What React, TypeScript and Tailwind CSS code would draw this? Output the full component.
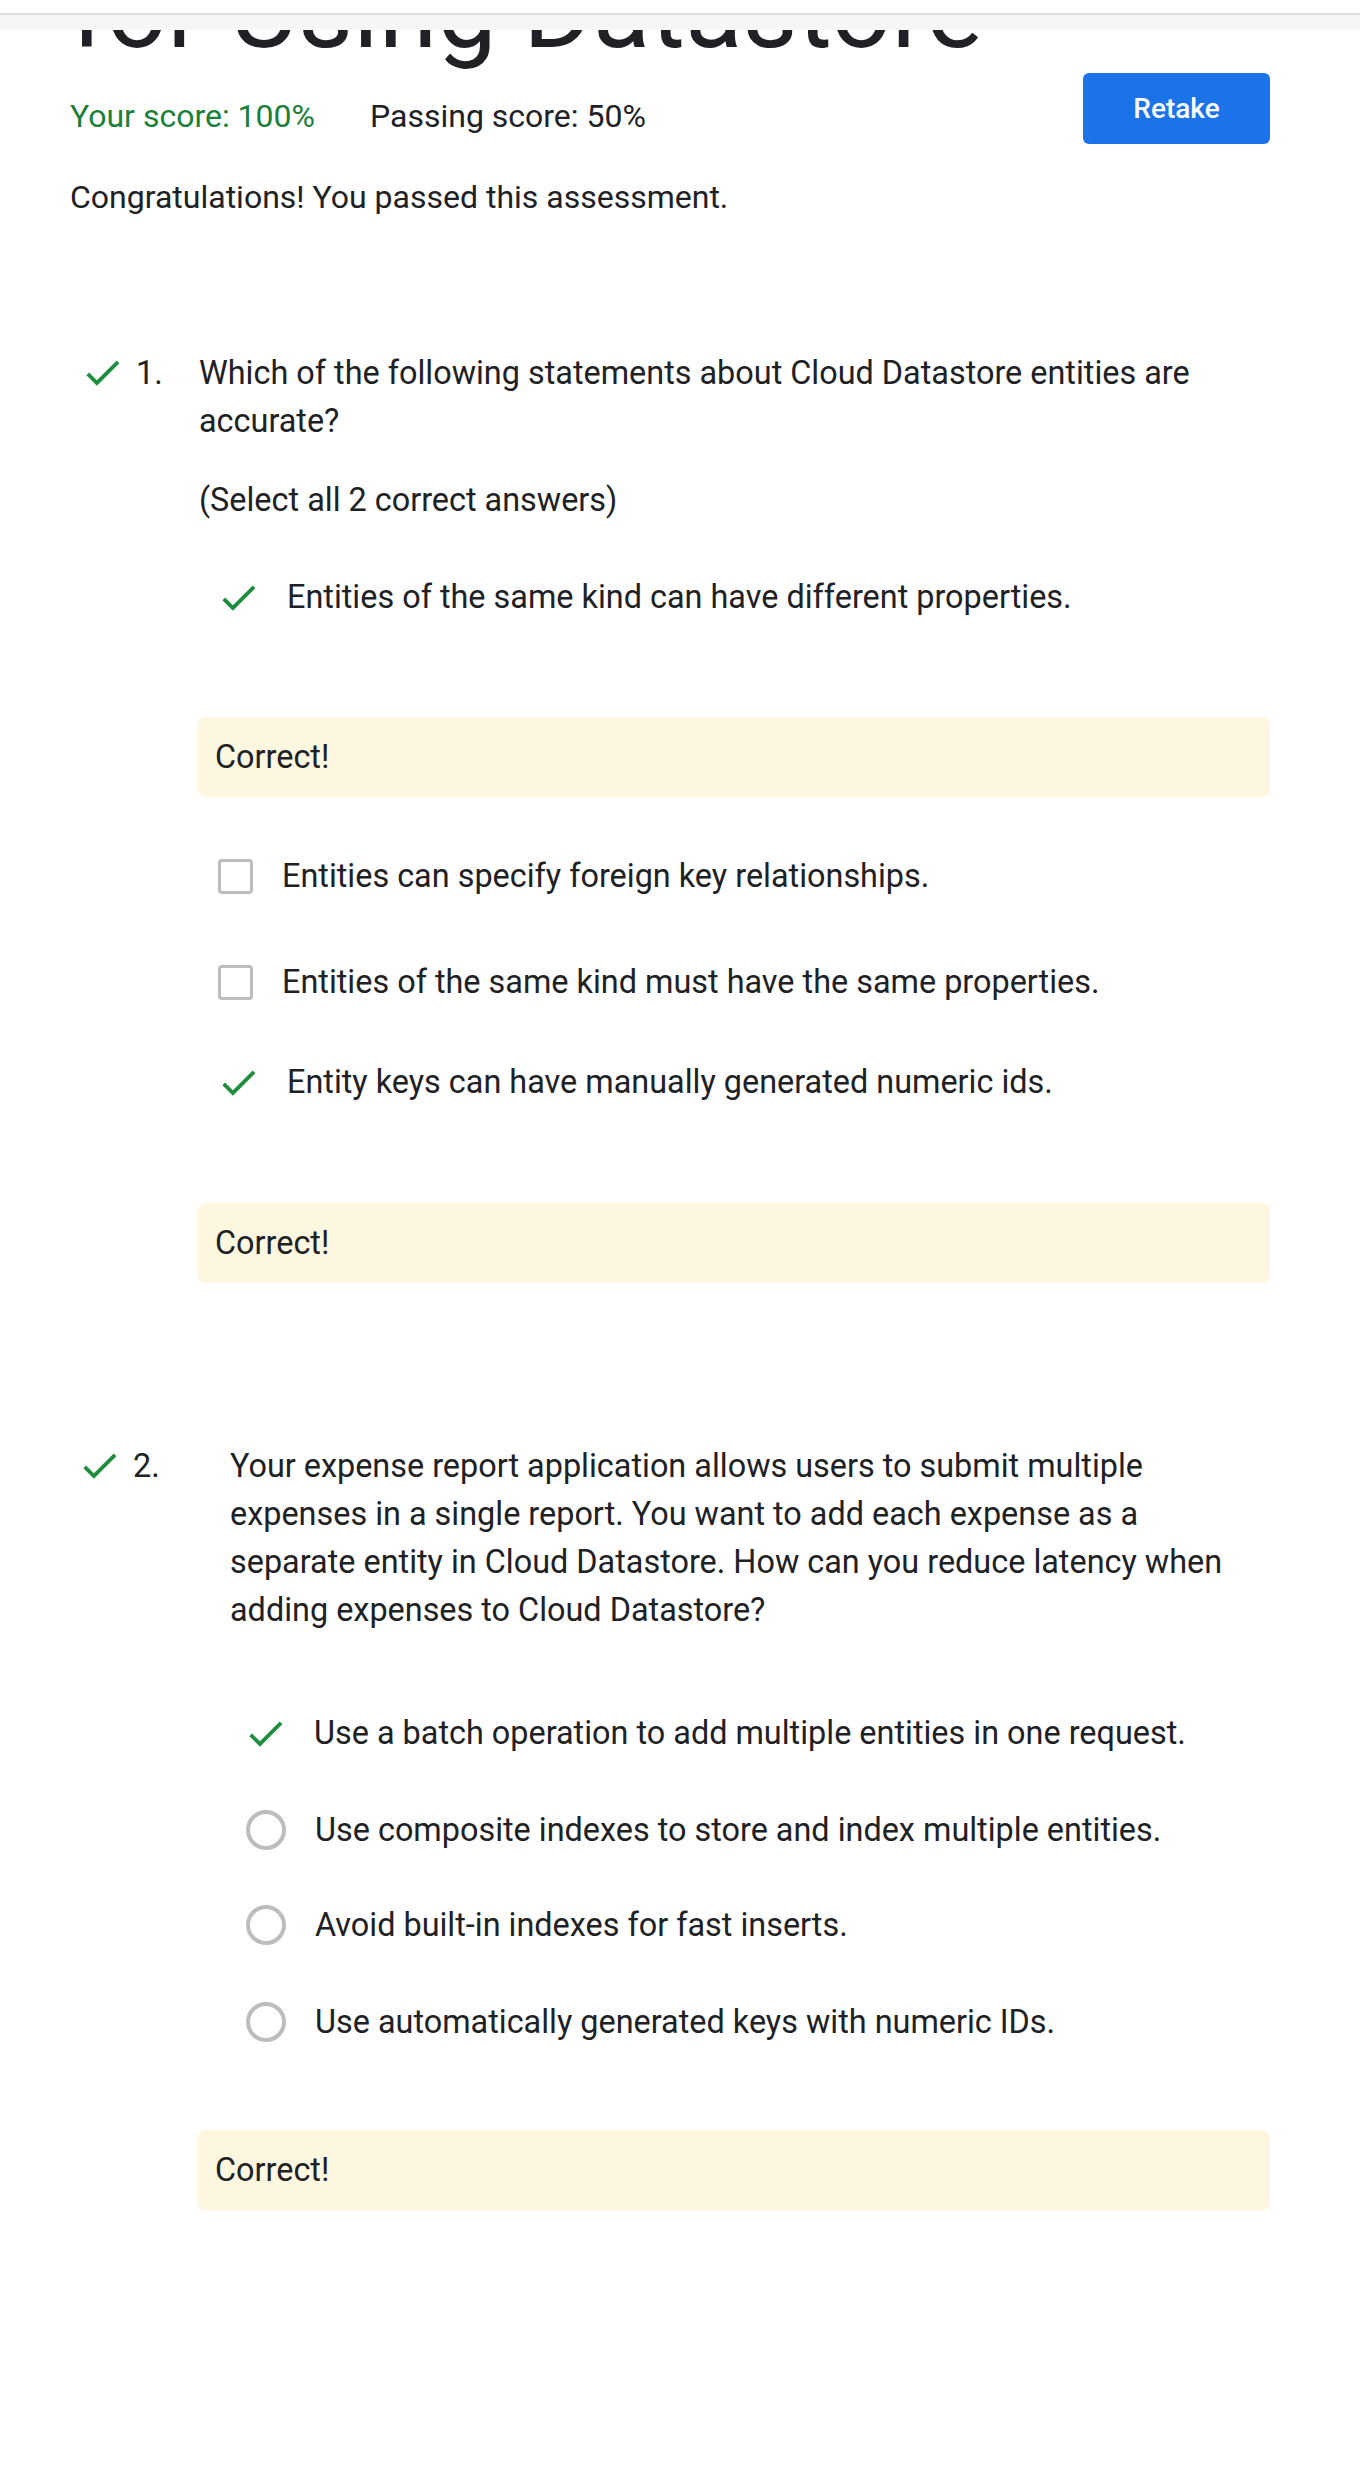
import React from 'react';

type OptionKind = 'check' | 'box' | 'radio';

interface Option {
  kind: OptionKind;
  text: string;
  mt: string;
  feedback?: string; // class for margin above the "Correct!" box
}

function CheckIcon({ className }: { className?: string }) {
  return (
    <svg viewBox="0 0 24 24" className={className} aria-hidden="true">
      <path fill="#1e8e3e" d="M9 16.17L4.83 12l-1.42 1.41L9 19 21 7l-1.41-1.41z" />
    </svg>
  );
}

function Feedback({ mt }: { mt: string }) {
  return (
    <div className={`${mt} h-[80px] rounded-[7px] bg-[#fef7e0] flex items-center pl-[17px]`}>
      Correct!
    </div>
  );
}

const q1Options: Option[] = [
  { kind: 'check', text: 'Entities of the same kind can have different properties.', mt: 'mt-[49px]', feedback: 'mt-[96px]' },
  { kind: 'box', text: 'Entities can specify foreign key relationships.', mt: 'mt-[55px]' },
  { kind: 'box', text: 'Entities of the same kind must have the same properties.', mt: 'mt-[58px]' },
  { kind: 'check', text: 'Entity keys can have manually generated numeric ids.', mt: 'mt-[52px]', feedback: 'mt-[97px]' },
];

const q2Options: Option[] = [
  { kind: 'check', text: 'Use a batch operation to add multiple entities in one request.', mt: 'mt-[75px]' },
  { kind: 'radio', text: 'Use composite indexes to store and index multiple entities.', mt: 'mt-[49px]' },
  { kind: 'radio', text: 'Avoid built-in indexes for fast inserts.', mt: 'mt-[47px]' },
  { kind: 'radio', text: 'Use automatically generated keys with numeric IDs.', mt: 'mt-[49px]' },
];

function OptionRow({ option, wide }: { option: Option; wide?: boolean }) {
  return (
    <>
      <div className={`${option.mt} flex h-[48px] items-center`}>
        {option.kind === 'check' && (
          <>
            <CheckIcon className={`${wide ? 'ml-[45px]' : 'ml-[18px]'} h-[45px] w-[45px] shrink-0`} />
            <span className="ml-[26px]">{option.text}</span>
          </>
        )}
        {option.kind === 'box' && (
          <>
            <span className="ml-[20px] h-[35px] w-[35px] shrink-0 rounded-[4px] border-[3.5px] border-[#bdbdbd]" />
            <span className="ml-[29px]">{option.text}</span>
          </>
        )}
        {option.kind === 'radio' && (
          <>
            <span className="ml-[48px] h-[40px] w-[40px] shrink-0 rounded-full border-[4px] border-[#bdbdbd]" />
            <span className="ml-[29px]">{option.text}</span>
          </>
        )}
      </div>
      {option.feedback && <Feedback mt={option.feedback} />}
    </>
  );
}

export default function App() {
  return (
    <div className="min-h-[2487px] bg-white font-['Roboto',sans-serif] text-[32.4px] leading-[48px] text-[#202124]">
      <div className="h-[13px]" />
      <div className="h-[17px] border-t-2 border-[#dadce0] bg-[#f6f6f8]" />

      <div className="w-[1270px] pl-[70px]">
        <div className="flex h-[43px] items-end overflow-hidden">
          <h1 className="whitespace-nowrap text-[106px] leading-[1.15] font-normal">for Using Datastore</h1>
        </div>

        <div className="flex items-start justify-between">
          <div className="mt-[27px] flex text-[32px] leading-[32px]">
            <span className="text-[#188038]">Your score: 100%</span>
            <span className="ml-[55px]">Passing score: 50%</span>
          </div>
          <button className="h-[71px] w-[187px] rounded-[6px] bg-[#1a73e8] text-[28px] font-medium text-white">
            Retake
          </button>
        </div>

        <p className="mt-[29px] text-[32px]">Congratulations! You passed this assessment.</p>

        {/* question 1 */}
        <div className="mt-[128px] flex">
          <div className="flex w-[129px] shrink-0 items-start">
            <CheckIcon className="ml-[10px] mt-[1px] h-[45px] w-[45px] shrink-0" />
            <span className="ml-[11px]">1.</span>
          </div>
          <p className="flex-1">Which of the following statements about Cloud Datastore entities are accurate?</p>
        </div>
        <div className="ml-[128px]">
          <p className="mt-[31px] pl-[1px]">(Select all 2 correct answers)</p>
          {q1Options.map((o) => (
            <OptionRow key={o.text} option={o} />
          ))}
        </div>

        {/* question 2 */}
        <div className="mt-[159px] flex">
          <div className="flex w-[160px] shrink-0 items-start">
            <CheckIcon className="ml-[7px] mt-[1px] h-[45px] w-[45px] shrink-0" />
            <span className="ml-[11px]">2.</span>
          </div>
          <p className="flex-1 pr-[20px]">
            Your expense report application allows users to submit multiple expenses in a single report. You want to add
            each expense as a separate entity in Cloud Datastore. How can you reduce latency when adding expenses to Cloud
            Datastore?
          </p>
        </div>
        <div className="ml-[128px]">
          {q2Options.map((o) => (
            <OptionRow key={o.text} option={o} wide />
          ))}
          <Feedback mt="mt-[84px]" />
        </div>
      </div>
    </div>
  );
}
